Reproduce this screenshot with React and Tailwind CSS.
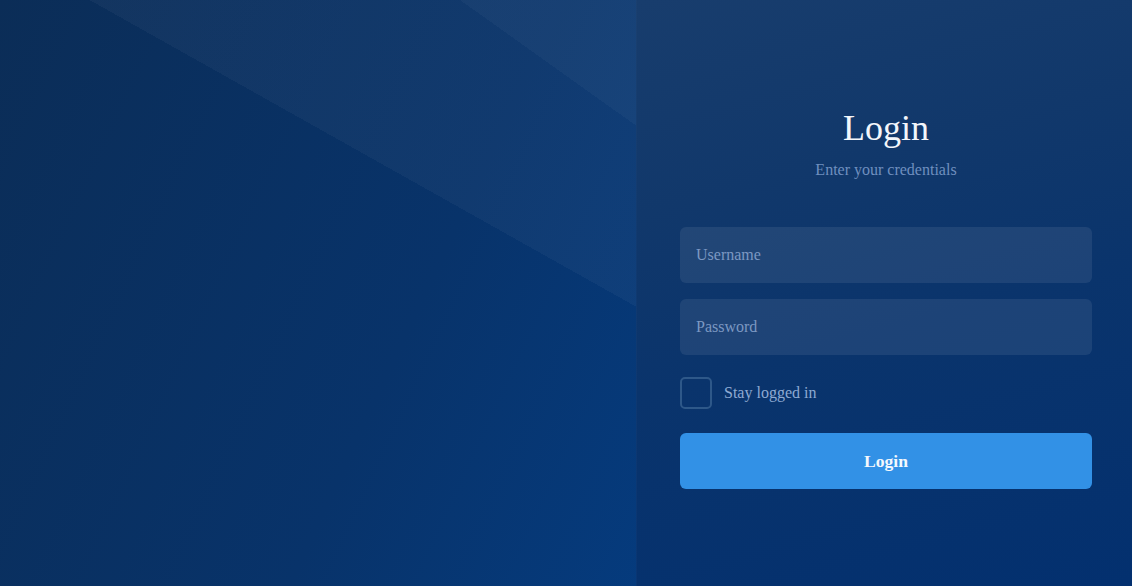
import React from "react";

export default function App() {
  return (
    <div
      className="flex h-[586px] w-full overflow-hidden bg-[#062f63]"
      style={{ fontFamily: '"Liberation Serif", "Times New Roman", serif' }}
    >
      <div className="w-[636px] shrink-0 bg-[linear-gradient(35.5deg,rgba(255,255,255,0)_65.6%,rgba(255,255,255,0.03)_65.6%),linear-gradient(29.3deg,rgba(255,255,255,0)_52.1%,rgba(255,255,255,0.035)_52.1%),linear-gradient(115deg,#0b2d57_0%,#08336a_40%,#043e85_75%,#034290_100%)] bg-[length:1132px_586px,1132px_586px,1132px_586px]" />
      <div className="flex flex-1 flex-col justify-center border-l border-white/[0.03] bg-[linear-gradient(165deg,#183d6d_0%,#11386b_30%,#0a346c_55%,#03306f_100%)] pl-[43px] pr-[40px] pt-[11px]">
        <h1 className="text-center text-4xl leading-10 text-[#f3f6fb]">Login</h1>
        <p className="mt-2.5 text-center text-base leading-6 text-[#6f8fbf]">
          Enter your credentials
        </p>
        <div className="mt-[45px] flex flex-col gap-4">
          <input
            type="text"
            placeholder="Username"
            className="h-14 w-full rounded-md bg-white/[0.08] px-4 text-base text-white outline-none placeholder:text-[#7c98c2]"
            style={{ fontFamily: '"Liberation Serif", "Times New Roman", serif' }}
          />
          <input
            type="password"
            placeholder="Password"
            className="h-14 w-full rounded-md bg-white/[0.08] px-4 text-base text-white outline-none placeholder:text-[#7c98c2]"
            style={{ fontFamily: '"Liberation Serif", "Times New Roman", serif' }}
          />
        </div>
        <label className="mt-[22px] flex items-center gap-3">
          <span className="h-8 w-8 rounded-[5px] border-2 border-[#2e5889]" />
          <span className="text-base leading-6 text-[#8eaad3]">Stay logged in</span>
        </label>
        <button
          className="mt-6 h-14 w-full rounded-md bg-[#3291e6] text-[17.6px] font-bold text-[#f4f8fd]"
          style={{ fontFamily: '"Liberation Serif", "Times New Roman", serif' }}
        >
          Login
        </button>
      </div>
    </div>
  );
}
